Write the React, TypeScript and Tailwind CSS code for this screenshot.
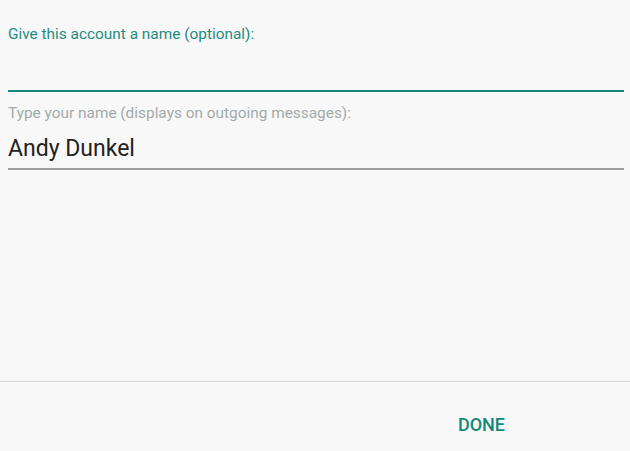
export default function App() {
  return (
    <div className="flex h-[451px] w-[630px] flex-col bg-[#f8f8f8] font-['Roboto',sans-serif]">
      <div className="flex flex-1 flex-col pl-2 pr-[6px] pt-[24px]">
        <label className="text-[15.4px] leading-[20px] text-[#1f8c7e]">
          Give this account a name (optional):
        </label>
        <div className="h-[48px] border-b-2 border-[#13877a]"></div>
        <label className="mt-[11px] text-[15.4px] leading-[20px] text-[#a2aba9]">
          Type your name (displays on outgoing messages):
        </label>
        <div className="mt-[12px] border-b-2 border-[#9c9c9c] pb-[5px] text-[23px] leading-[28px] text-[#212121]">
          Andy Dunkel
        </div>
      </div>
      <div className="flex h-[70px] items-start justify-end border-t border-[#d6d6d6] pr-[125px] pt-[33px]">
        <button className="text-[18px] font-medium leading-[20px] text-[#13877a]">DONE</button>
      </div>
    </div>
  );
}
